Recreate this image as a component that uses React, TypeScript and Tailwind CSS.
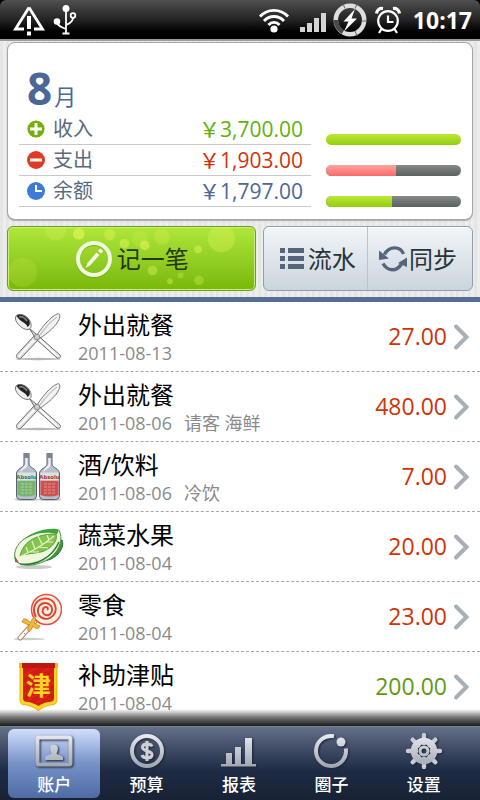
import type { ReactNode } from "react";

function StatusBar() {
  return (
    <header className="bg-black">
      <div className="flex h-[39px] items-center rounded-t-md bg-linear-to-b from-[#505050] via-[#242424] to-black pr-2 pl-3 text-white">
        <svg width="34" height="36" viewBox="0 0 34 36" aria-label="警告">
          <path d="M17 5.5 L30.5 27 H22 M12 27 H3.5 L17 5.5" fill="none" stroke="#fff" strokeWidth="2.8" />
          <path d="M15 14h4v13h-4z M15 29.5h4v4h-4z" fill="#fff" />
        </svg>
        <svg width="26" height="32" viewBox="0 0 26 32" className="ml-1.5" fill="none" stroke="#fff" strokeWidth="1.8" aria-label="USB">
          <path d="M14 5v24M14 25C8 23 5.500 21 5 18M14 21c5-2 7-4 7-7.500M10.500 29.500h7" />
          <circle cx="14" cy="4.500" r="2.600" fill="#fff" />
          <circle cx="5" cy="17.500" r="2.400" fill="#fff" />
          <circle cx="21" cy="11.500" r="2.300" />
        </svg>
        <div className="ml-auto flex items-center">
          <svg width="32" height="28" viewBox="0 0 32 28" fill="none" stroke="#fff" strokeWidth="2.800" aria-label="无线网络">
            <path d="M2 10.500C9.500 2.200 22.500 2.200 30 10.500M6 15c5.500-6 14.500-6 20 0M10.500 19c3-3.500 8-3.500 11 0" />
            <circle cx="16" cy="23" r="3.600" fill="#fff" stroke="none" />
          </svg>
          <svg width="27" height="20" viewBox="0 0 27 20" className="mt-1 ml-2.5" aria-label="信号">
            <path d="M0 15h5v5H0zM7 11h5v9H7zM14 6h5v14h-5zM21 1h5v19h-5z" fill="#d4d4d4" />
          </svg>
          <svg width="34" height="34" viewBox="0 0 34 34" className="ml-1.5" aria-label="充电">
            <circle cx="17" cy="17" r="14.200" fill="none" stroke="#dedede" strokeWidth="4.500" />
            <path d="M3 17A14 14 0 0 0 10 29" fill="none" stroke="#4a4a4a" strokeWidth="4.500" />
            <path d="M10 1l2 4.500M24 1l-2 4.500M33 18h-5M24 33l-2-5" stroke="#666" strokeWidth="1" />
            <path d="M22 6L10.500 18.500h5L11 28.500 24 15.500h-5.500z" fill="#fff" />
          </svg>
          <svg width="26" height="28" viewBox="0 0 26 28" className="ml-2" fill="none" stroke="#fff" strokeWidth="2.200" aria-label="闹钟">
            <circle cx="13" cy="15" r="9.800" />
            <path d="M13 9.500V16h5.500M6.500 23l-2.500 4M19.500 23l2.500 4" />
            <path d="M1.500 7.500C2 4 4.500 2 8 2.500M24.500 7.500C24 4 21.500 2 18 2.500" strokeWidth="3.200" />
          </svg>
          <time className="ml-3 text-[23px] leading-8 font-bold">10:17</time>
        </div>
      </div>
    </header>
  );
}

const SUMMARY = [
  { label: "收入", amount: "3,700.00", color: "text-[#62b10b]", percent: 100, fill: "from-[#bfe638] to-[#91cf04]", icon: "plus" },
  { label: "支出", amount: "1,903.00", color: "text-[#cf3408]", percent: 52, fill: "from-[#ffa3a0] to-[#f96968]", icon: "minus" },
  { label: "余额", amount: "1,797.00", color: "text-[#4a6797]", percent: 49, fill: "from-[#bfe638] to-[#91cf04]", icon: "clock" },
];

function SummaryIcon({ kind }: { kind: string }) {
  if (kind === "plus")
    return (
      <svg width="18" height="18" viewBox="0 0 18 18" className="shrink-0">
        <circle cx="9" cy="9" r="8.600" fill="#73af0b" />
        <path d="M9 3v12M3 9h12" stroke="#fff" strokeWidth="3" />
      </svg>
    );
  if (kind === "minus")
    return (
      <svg width="18" height="18" viewBox="0 0 18 18" className="shrink-0">
        <circle cx="9" cy="9" r="9" fill="#df3a22" />
        <path d="M3 9h12" stroke="#fff" strokeWidth="3" />
      </svg>
    );
  return (
    <svg width="18" height="18" viewBox="0 0 18 18" className="shrink-0">
      <circle cx="9" cy="9" r="9" fill="#3d7bd5" />
      <path d="M9 3v6h6" fill="none" stroke="#fff" strokeWidth="2" />
    </svg>
  );
}

function Summary() {
  return (
    <section className="rounded-lg border border-[#a3a5a9] bg-white px-[11px] pt-5 pb-3 shadow-[0_1px_1px_#aaacae]">
      <h1 className="flex h-[51px] items-baseline gap-0.5 pl-2 leading-[50px] text-[#4a6797]">
        <span className="text-[44px] font-bold">8</span>
        <span className="text-[22px]">月</span>
      </h1>
      <table className="w-full border-separate border-spacing-0">
        <tbody>
          {SUMMARY.map((row) => (
            <tr key={row.label} className="h-[31px]">
              <th scope="row" className="border-b border-[#c9c9c9] p-0 pl-2 text-left font-normal text-[#596a7d]">
                <span className="flex items-center gap-2 text-[20px] leading-[30px]">
                  <SummaryIcon kind={row.icon} />
                  {row.label}
                </span>
              </th>
              <td className={`border-b border-[#c9c9c9] p-0 pr-2 text-right text-[21px] leading-[30px] ${row.color}`}>
                {"\uFFE5"}
                {row.amount}
              </td>
              <td className="w-[150px] p-0 pl-[15px] align-bottom">
                <div className="h-[11px] overflow-hidden rounded-full bg-linear-to-b from-[#868b88] to-[#5b615e]">
                  <div className={`h-full bg-linear-to-b ${row.fill}`} style={{ width: `${row.percent}%` }} />
                </div>
              </td>
            </tr>
          ))}
        </tbody>
      </table>
    </section>
  );
}

function Actions() {
  return (
    <div className="flex h-[65px] gap-[7px]">
      <button className="relative flex flex-1 items-center justify-center gap-1 overflow-hidden rounded-md border border-[#6d9c22] bg-linear-to-b from-[#b0e73a] to-[#78b805] text-2xl text-[#26380f] shadow-[inset_0_0_0_1px_#c8f07a]">
        <svg className="absolute inset-0 h-full w-full" viewBox="0 0 249 65" fill="#e0f45a" aria-hidden="true">
          <circle cx="12" cy="47" r="15" opacity=".18" />
          <circle cx="46" cy="3" r="11" opacity=".25" />
          <circle cx="70" cy="7" r="6" opacity=".65" />
          <circle cx="102" cy="8" r="6" opacity=".4" />
          <circle cx="117" cy="17" r="5" opacity=".5" />
          <circle cx="138" cy="19" r="5" opacity=".6" />
          <circle cx="133" cy="12" r="8" opacity=".2" />
          <circle cx="156" cy="10" r="8" opacity=".25" />
          <circle cx="146" cy="45" r="5" opacity=".4" />
          <circle cx="164" cy="56" r="3" opacity=".4" />
          <circle cx="175" cy="50" r="3" opacity=".3" />
          <circle cx="193" cy="23" r="4" opacity=".5" />
          <circle cx="194" cy="55" r="5" opacity=".3" />
          <circle cx="217" cy="12" r="14" opacity=".35" />
        </svg>
        <svg width="38" height="38" viewBox="0 0 38 38" className="relative" aria-hidden="true">
          <circle cx="19" cy="20" r="16" fill="none" stroke="#5b8f0d" strokeWidth="4" opacity=".5" />
          <circle cx="19" cy="19" r="16" fill="none" stroke="#f0f7df" strokeWidth="4" />
          <path d="M10.500 28l2-5L21.500 12.500l3 2.500L15 25.500z M22.800 11l2.300-2.500 3.200 2.500-2.200 2.500z" fill="#f3f8e8" />
        </svg>
        <span className="relative">记一笔</span>
      </button>
      <div className="grid w-[45%] grid-cols-2 divide-x divide-[#b9c4cb] rounded-md border border-[#969ca6] bg-linear-to-b from-[#f2f6f9] to-[#cad5dc] text-2xl text-[#283238] shadow-[inset_0_1px_0_#fff]">
        <button className="flex items-center justify-center gap-1 pl-1">
          <svg width="24" height="22" viewBox="0 0 24 22" fill="#56647c" className="shrink-0" aria-hidden="true">
            <path d="M0 0h5v5H0zM8 0h16v5H8zM0 8h5v5H0zM8 8h16v5H8zM0 16h5v5H0zM8 16h16v5H8z" />
          </svg>
          流水
        </button>
        <button className="flex items-center justify-center gap-0.5 pr-1">
          <svg width="28" height="26" viewBox="0 0 28 26" className="shrink-0" aria-hidden="true">
            <path d="M5.500 8.500C10-.5 21.500 0 24.500 8M22.500 18C17.500 26 8.500 25.500 4 17.500" fill="none" stroke="#56647c" strokeWidth="3.400" />
            <path d="M0 4.500V14l10-1.500zM28 11.500V21l-9-4z" fill="#56647c" />
          </svg>
          同步
        </button>
      </div>
    </div>
  );
}

function CutleryIcon() {
  return (
    <svg width="48" height="48" viewBox="0 0 48 48" aria-hidden="true">
      <ellipse cx="24" cy="46" rx="23" ry="1.200" fill="#999" opacity=".7" />
      <path d="M21 25C28 14 36 4 43.500.8c2.500-.6 3 2 1.500 5.700C42 13 34 20 25 26z" fill="#f3f3f3" stroke="#777" strokeWidth="1" />
      <path d="M26 22C31 15 37 8 43 4" stroke="#c4c4c4" strokeWidth="1.500" fill="none" />
      <path d="M20.500 22.500l4.500 3.500L7 45c-2 2-6-.5-4-3.500z" fill="#e4e4e4" stroke="#666" />
      <path d="M20 27L5 43" stroke="#fff" strokeWidth="1.500" />
      <path d="M15.500 15.500L25 23.500 46 42c1.500 2-.5 4-3 3L22 26z" fill="#e9e9e9" stroke="#666" />
      <path d="M26 27L43 43" stroke="#fff" strokeWidth="1.500" />
      <path d="M2 3C5-.5 13 2 16 8c2 4 1.500 8-2 8.500C8 17-1 8 2 3z" fill="#eee" stroke="#777" />
      <path d="M2.500 3C6 0 13 3 15.500 8c1 3 0 5-2 6C12 9 7 10 2.500 3z" fill="#222" />
      <path d="M5 4c3-1 6 1 8 4" stroke="#888" strokeWidth="1.500" fill="none" />
      <circle cx="23" cy="24" r="2.800" fill="#ccc" stroke="#777" strokeWidth=".8" />
    </svg>
  );
}

function Bottle({ x, color, ink }: { x: number; color: string; ink: string }) {
  return (
    <g transform={`translate(${x} 0)`}>
      <ellipse cx="10.500" cy="46.500" rx="12" ry="1.800" fill="#999" opacity=".5" />
      <path d="M8 0h5v11c0 4 7.500 4 7.500 10v22q0 3.500-4 3.500h-12q-4 0-4-3.500V21C.5 15 8 15 8 11z" fill="#b7bfcc" stroke="#586174" strokeWidth="1" />
      <path d="M9.500 1h2v11c-1 4-6 4-7 8v-1c0-4 5-5 5-9z" fill="#eef1f5" />
      <path d="M8 0h5v5H8z" fill="#7b8596" />
      <path d="M1.500 27.500h18V42q-9 3-18 0z" fill={color} />
      <path d="M5 31h11M5 34h11M5 37h11M5 40h11" stroke="#fff" strokeWidth=".7" opacity=".55" strokeDasharray="3 1" />
      <path d="M1.500 19.500h18v8h-18z" fill="#dce3df" />
      <text x="10.500" y="26" textAnchor="middle" fontSize="6" fontWeight="bold" fill={ink}>Absolu</text>
    </g>
  );
}

function BottlesIcon() {
  return (
    <svg width="48" height="48" viewBox="0 0 48 48" aria-hidden="true">
      <Bottle x={2} color="#79b36f" ink="#2f6b43" />
      <Bottle x={25} color="#d0504f" ink="#a52a36" />
    </svg>
  );
}

function VegetableIcon() {
  return (
    <svg width="50" height="48" viewBox="0 0 50 48" aria-hidden="true">
      <ellipse cx="20" cy="44" rx="18" ry="2" fill="#999" opacity=".5" />
      <path d="M30 28L48 17c3 7-4 19-18 21z" fill="#3d9639" stroke="#22702b" />
      <path d="M1 36C-2 21 14 7 45 7c4 8 2 19-9 28-11 8-29 10-34 3z" fill="#eff7df" stroke="#479442" strokeWidth="1" />
      <path d="M10 17C18 9 30 5 43 6c2 2 1 4 0 5C29 8 19 11 10 17z" fill="#3fa23d" />
      <path d="M6 33C9 20 20 11 42 11c2 6-3 13-12 17-8 3-18 2-24 5z" fill="#86c44d" stroke="#51a33c" />
      <path d="M5 34C16 29 27 24 40 13M14 29l-2-5M21 26l-3-8M28 21l-4-8M35 17l-2-5M17 29l8 0M25 24l9 1M32 19l7 0" stroke="#e6f5c2" strokeWidth="1.200" fill="none" />
      <path d="M6 41c16 2 32-6 39-22" stroke="#2c8132" strokeWidth="1.600" fill="none" />
      <path d="M1 33l4 7-4-1z" fill="#a45a49" />
    </svg>
  );
}

function LollipopIcon() {
  return (
    <svg width="48" height="48" viewBox="0 0 48 48" aria-hidden="true">
      <ellipse cx="15" cy="46" rx="16" ry="1.200" fill="#aaa" opacity=".6" />
      <path d="M23 26L6 45" stroke="#b98466" strokeWidth="5" strokeLinecap="round" />
      <path d="M23 26L6 45" stroke="#fff" strokeWidth="3" strokeLinecap="round" />
      <path d="M10 40l2 2M14 35l2 2" stroke="#dd7a69" />
      <circle cx="32.500" cy="16.500" r="15" fill="#fbf1df" stroke="#e5503f" strokeWidth="1.500" />
      <path d="M33 17c1.500-1 1-3-1-3-3 0-4.500 4-2.500 6.500 3 3.500 8 1.500 8.500-3C38.500 12.500 34.500 10 31 10c-5 0-8 5-7 9.500 1.500 6 8 7.500 12 5.500 5-2.500 7-8 5-13C38.500 5.500 31 4 25.500 7 19.500 10.500 18.500 18 22 24" fill="none" stroke="#e0402f" strokeWidth="1.900" />
      <path d="M17 30c-6-6-8-5-9-1 3 1 5 3 8 3-3 3-3 5-1 7 2-2 3-4 4-6 3 4 6 3 7 0-3-1-4-2-6-3 2-2 2-5 0-6-2 2-3 4-3 6z" fill="#f2b838" stroke="#c88619" strokeWidth=".8" />
    </svg>
  );
}

function PennantIcon() {
  return (
    <svg width="48" height="48" viewBox="0 0 48 48" aria-hidden="true">
      <path d="M6 3h37v34c0 4-3 5-7 5-5 1-8 3-11.500 5.500C21 45 17 43 13 42c-5 0-7-1-7-5z" fill="#f9d71e" stroke="#dda200" strokeWidth=".8" />
      <path d="M9 4h31v31c0 3-2 4-6 4-4 1-7 2-9.500 4C22 41 18 40 15 39c-4 0-6-1-6-4z" fill="#d31c13" />
      <path d="M9 14l14-10M9 23L35 5M9 32L40 10M13 38L40 19M22 40l18-12" stroke="#f0412c" strokeWidth="1.500" opacity=".4" />
      <path d="M5 0h39v5H5z" fill="#bd1710" />
      <path d="M5 0h3v5H5zM41 0h3v5h-3z" fill="#f2b71c" />
      <text x="24.500" y="32" textAnchor="middle" fontSize="25" fontWeight="bold" fill="#ffd323">津</text>
    </svg>
  );
}

type Entry = { id: number; title: string; date: string; note?: string; amount: string; income?: boolean; icon: ReactNode };

const ENTRIES: Entry[] = [
  { id: 1, title: "外出就餐", date: "2011-08-13", amount: "27.00", icon: <CutleryIcon /> },
  { id: 2, title: "外出就餐", date: "2011-08-06", note: "请客 海鲜", amount: "480.00", icon: <CutleryIcon /> },
  { id: 3, title: "酒/饮料", date: "2011-08-06", note: "冷饮", amount: "7.00", icon: <BottlesIcon /> },
  { id: 4, title: "蔬菜水果", date: "2011-08-04", amount: "20.00", icon: <VegetableIcon /> },
  { id: 5, title: "零食", date: "2011-08-04", amount: "23.00", icon: <LollipopIcon /> },
  { id: 6, title: "补助津贴", date: "2011-08-04", amount: "200.00", income: true, icon: <PennantIcon /> },
];

function EntryRow({ entry }: { entry: Entry }) {
  return (
    <li className="border-b border-dashed border-[#a6a6a6] last:border-transparent">
      <button className="flex h-[69px] w-full items-center pr-2.5 pl-3.5 text-left">
        <span className="flex w-16 shrink-0">{entry.icon}</span>
        <span className="flex flex-1 flex-col">
          <span className="text-2xl leading-8 text-black">{entry.title}</span>
          <span className="flex gap-3 text-[18px] leading-6 text-[#8a8a8a]">
            <span>{entry.date}</span>
            {entry.note && <span>{entry.note}</span>}
          </span>
        </span>
        <span className={`text-[23px] ${entry.income ? "text-[#5f9a12]" : "text-[#cf3408]"}`}>{entry.amount}</span>
        <svg width="17" height="28" viewBox="0 0 17 28" className="ml-1.5" aria-hidden="true">
          <path d="M3 3.500L13.500 14 3 24.500" fill="none" stroke="#a7afb7" strokeWidth="4" strokeLinecap="round" strokeLinejoin="miter" />
        </svg>
      </button>
    </li>
  );
}

function Gear() {
  return (
    <>
      {[0, 45, 90, 135, 180, 225, 270, 315].map((angle) => (
        <path key={angle} d="M18 2v8" transform={`rotate(${angle} 18 18)`} stroke="#c9ccd3" strokeWidth="4.400" strokeLinecap="round" />
      ))}
      <circle cx="18" cy="18" r="10" fill="none" stroke="url(#metal)" strokeWidth="6.500" />
      <circle cx="18" cy="18" r="4" fill="none" stroke="url(#metal)" strokeWidth="3" />
    </>
  );
}

const TABS: { label: string; icon: ReactNode }[] = [
  {
    label: "账户",
    icon: (
      <>
        <rect x="1.500" y="4.500" width="33" height="27" rx="1.500" fill="none" stroke="url(#metal)" strokeWidth="4" />
        <path d="M9 27v-3c2-2 5-2 6.500-3.500-2-3-2.500-9 2.500-9s4.500 6 2.500 9C22 22 25 22 27 24v3z" fill="url(#metal)" />
      </>
    ),
  },
  {
    label: "预算",
    icon: (
      <>
        <circle cx="18" cy="18" r="15" fill="none" stroke="url(#metal)" strokeWidth="4" />
        <path d="M23 13.500c-1-3-9-3.500-9.500.500-.5 5 10 3 9.500 8-.5 4-9 3.500-10 0M18 8v20" fill="none" stroke="#cdd0d6" strokeWidth="3.200" />
      </>
    ),
  },
  {
    label: "报表",
    icon: <path d="M0 31h35v2.500H0zM5 20h6v11H5zM14 14h6v17h-6zM24 5h7v26h-7z" fill="url(#metal)" />,
  },
  {
    label: "圈子",
    icon: (
      <>
        <path d="M21 3.300A15 15 0 1 0 32.800 15.500" fill="none" stroke="url(#metal)" strokeWidth="4" />
        <circle cx="28" cy="9" r="4.500" fill="url(#metal)" />
      </>
    ),
  },
  { label: "设置", icon: <Gear /> },
];

function TabBar() {
  return (
    <nav className="sticky bottom-0 mt-auto">
      <div className="pointer-events-none absolute inset-x-0 bottom-full h-[17px] bg-linear-to-b from-black/0 via-black/55 to-black/90" />
      <div className="grid h-[74px] grid-cols-5 border-t border-[#75809a] bg-linear-to-b from-[#65708a] from-0% via-[#1e2b44] via-60% to-[#182235] pt-0.5 pr-2.5 pb-0.5 pl-2">
        {TABS.map((tab, index) => (
          <button
            key={tab.label}
            aria-current={index === 0 ? "page" : undefined}
            className={`flex flex-col items-center rounded-md pt-1 text-[17px] leading-6 font-medium text-white ${
              index === 0 ? "bg-linear-to-b from-[#d2dffc] from-0% via-[#7792c6] via-50% to-[#4e6ba5]" : ""
            }`}
          >
            <svg width="36" height="36" viewBox="0 0 36 36" className="mb-1 shrink-0 overflow-visible drop-shadow-[1px_1px_1px_#1a2335]" aria-hidden="true">
              <defs>
                <linearGradient id="metal" gradientUnits="userSpaceOnUse" x1="0" y1="0" x2="0" y2="36">
                  <stop stopColor="#eceef2" />
                  <stop offset="1" stopColor="#9ba1ad" />
                </linearGradient>
              </defs>
              {tab.icon}
            </svg>
            {tab.label}
          </button>
        ))}
      </div>
    </nav>
  );
}

export default function App() {
  return (
    <div className="flex min-h-screen flex-col bg-white font-['Open_Sans','Noto_Sans_CJK_SC',sans-serif]">
      <StatusBar />
      <div className="flex flex-col gap-1.5 border-t-2 border-b-[5px] border-t-[#9a9d98] border-b-[#546e95] bg-[#e8eaea] bg-[repeating-linear-gradient(90deg,#e4e6e6_0_3px,#ededed_3px_6px)] px-[7px] pt-px pb-1.5">
        <Summary />
        <Actions />
      </div>
      <ul>
        {ENTRIES.map((entry) => (
          <EntryRow key={entry.id} entry={entry} />
        ))}
      </ul>
      <TabBar />
    </div>
  );
}
